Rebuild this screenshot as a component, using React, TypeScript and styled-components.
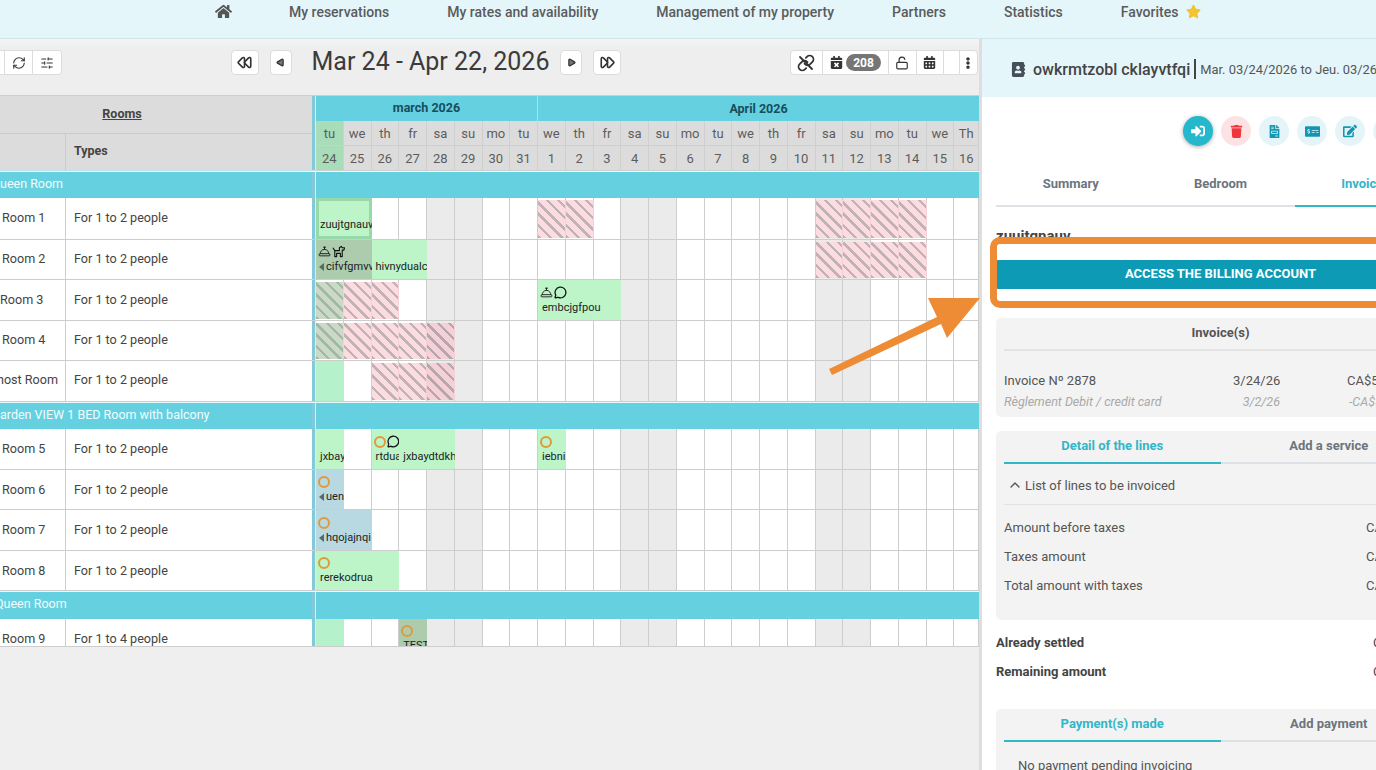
import React from "react";
import styled, { createGlobalStyle, css } from "styled-components";
import { Rewind, FastForward, Play, RefreshCw, SlidersHorizontal, LockOpen, ConciergeBell, MessageCircle, ChevronUp } from "lucide-react";
import { FaHome, FaStar, FaCalendarTimes, FaCalendarAlt, FaEllipsisV, FaAddressBook, FaSignInAlt, FaTrash, FaFileInvoice, FaMoneyCheckAlt, FaEdit } from "react-icons/fa";

const Global = createGlobalStyle`
  html, body { margin: 0; padding: 0; width: 1376px; height: 770px; overflow: hidden; background: #efefef; }
  body { font-family: Roboto, "Liberation Sans", sans-serif; color: #444; }
  * { box-sizing: border-box; }
`;

const Page = styled.div`position: relative; width: 1376px; height: 770px; overflow: hidden;`;
const Nav = styled.nav`
  height: 39px; background: #e4f6fa; border-bottom: 1px solid #cfe6ec;
  display: flex; align-items: flex-start; gap: 58px; padding: 2px 0 0 215px;
`;
const NavItem = styled.a`
  display: flex; align-items: center; gap: 8px; height: 19px;
  font-size: 14px; font-weight: 500; color: #5b5b5b; white-space: nowrap;
`;
const HomeIcon = styled(FaHome)`font-size: 17px; color: #555; margin-right: -1px;`;
const StarIcon = styled(FaStar)`font-size: 15px; color: #f4c430;`;

const Main = styled.div`display: flex; height: 731px;`;
const Left = styled.div`width: 979px; flex: none;`;
const Toolbar = styled.div`
  height: 56px; padding: 11px 1px 0 0; display: flex; justify-content: space-between; align-items: flex-start;
  background: linear-gradient(#f4f4f4, #eeeeee 10px);
`;
const Group = styled.div<{ $open?: boolean }>`
  display: flex; height: 25px; background: #fff; border: 1px solid #dcdcdc; border-radius: 4px; overflow: hidden;
  ${(p) => p.$open && css`border-left: 0; border-radius: 0 4px 4px 0;`}
`;
const GroupCell = styled.div<{ $w: number }>`
  width: ${(p) => p.$w}px; display: flex; align-items: center; justify-content: center; gap: 3px;
  border-right: 1px solid #dcdcdc; color: #333; font-size: 13px;
  &:last-child { border-right: 0; }
`;
const Center = styled.div`display: flex; align-items: flex-start; gap: 11px;`;
const NavBtn = styled.button<{ $w: number }>`
  width: ${(p) => p.$w}px; height: 25px; padding: 0; background: #fff; border: 1px solid #dcdcdc; border-radius: 4px;
  display: flex; align-items: center; justify-content: center; color: #333;
`;
const Title = styled.h1`
  margin: -4px 0 0 9px; font-size: 25px; line-height: 31px; font-weight: 400; color: #3b3b3b; white-space: nowrap;
`;
const Badge = styled.span`
  width: 35px; height: 17px; border-radius: 9px; background: #757575; color: #fff;
  font-size: 12px; font-weight: 700; display: flex; align-items: center; justify-content: center;
`;
const FlipPlay = styled(Play)`transform: rotate(180deg);`;

const Table = styled.div`height: 552px; border-top: 1px solid #cdcdcd; border-bottom: 1px solid #cdcdcd; overflow: hidden; background: #fff;`;
const HeaderRow = styled.div`display: flex; height: 75px; border-bottom: 1px solid #bfe3ea;`;
const HeadLeft = styled.div`width: 312px; flex: none; background: #dcdcdc;`;
const RoomsHead = styled.div`
  height: 38px; border-bottom: 1px solid #cbcbcb; display: flex; align-items: center; justify-content: center;
  padding: 0 68px 2px 0; font-size: 12.5px; font-weight: 700; color: #444; text-decoration: underline;
`;
const TypesHead = styled.div`display: flex; height: 37px;`;
const BlankHead = styled.div`width: 66px; border-right: 1px solid #cbcbcb;`;
const TypeHead = styled.div`padding: 9px 0 0 8px; font-size: 12.5px; font-weight: 700; color: #444;`;
const Divider = styled.div`width: 4px; flex: none; background: #84c9d9; border-right: 1px solid #d8edf2;`;
const HeadRight = styled.div`flex: 1; min-width: 0;`;
const MonthRow = styled.div`display: flex; height: 25px; background: #65d0e0;`;
const Month = styled.div<{ $w: number; $lift: number }>`
  width: ${(p) => p.$w}px; display: flex; align-items: center; justify-content: center; padding-bottom: ${(p) => p.$lift}px;
  font-size: 12.5px; font-weight: 700; color: #174e5c; border-right: 1px solid #a9e2eb;
  &:last-child { border-right: 0; }
`;
const cols = "repeat(23, 27.75px) 25px";
const DayRow = styled.div`display: grid; grid-template-columns: ${cols}; height: 25px;`;
const DayCell = styled.div<{ $today?: boolean }>`
  display: flex; align-items: center; justify-content: center; font-size: 13px; color: #5c5c5c;
  background: ${(p) => (p.$today ? "#a9dcb9" : "#dcdcdc")};
  border-right: 1px solid #cfcfcf; border-bottom: 1px solid #cfcfcf;
`;
const SectionRow = styled.div<{ $h: number }>`display: flex; height: ${(p) => p.$h}px; border-top: 1px solid #e9f8fb;`;
const SectionName = styled.div<{ $shift?: number }>`
  width: 312px; flex: none; background: #65d0e0; color: #f2fdff; font-size: 12.5px; line-height: 23px;
  white-space: nowrap; overflow: hidden; text-indent: ${(p) => p.$shift ?? 0}px;
`;
const SectionFill = styled.div`flex: 1; background: #65d0e0;`;
const Row = styled.div<{ $h: number }>`display: flex; height: ${(p) => p.$h}px; border-bottom: 1px solid #cdcdcd;`;
const RoomName = styled.div<{ $pad: number; $top: number }>`
  width: 66px; flex: none; border-right: 1px solid #cdcdcd; padding-top: ${(p) => p.$top}px; text-indent: ${(p) => p.$pad}px;
  font-size: 12.6px; color: #444; white-space: nowrap; overflow: hidden;
`;
const TypeName = styled.div<{ $top: number }>`width: 246px; flex: none; padding: ${(p) => p.$top}px 0 0 8px; font-size: 12.6px; color: #444;`;
const Timeline = styled.div`flex: 1; display: grid; grid-template-columns: ${cols}; grid-template-rows: minmax(0, 1fr); min-width: 0;`;
const Cell = styled.div<{ $col: number; $weekend: boolean }>`
  grid-row: 1; grid-column: ${(p) => p.$col + 1}; border-right: 1px solid #cdcdcd;
  background: ${(p) => (p.$weekend ? "#ebebeb" : "#fff")};
`;
const tones = {
  pink: ["#fcdbe1", "#c0b3b6"],
  deep: ["#f5d0d8", "#b5a8ac"],
  green: ["#cdd8c8", "#9dbca2"],
};
const Hatch = styled.div<{ $col: number; $tone: keyof typeof tones }>`
  grid-row: 1; grid-column: ${(p) => p.$col + 1}; z-index: 1; margin: 2px 0 1px;
  background: repeating-linear-gradient(45deg, ${(p) => tones[p.$tone][1]} 0 2.4px, ${(p) => tones[p.$tone][0]} 2.4px 8px);
  border-right: 1px solid #f4d0d7;
`;
const kinds = {
  light: "#bdf4c8",
  mint: "#b5f2cb",
  dark: "#adcbad",
  blue: "#b8d8e2",
};
const Booking = styled.div<{ $col: number; $span: number; $kind: keyof typeof kinds; $selected?: boolean }>`
  grid-row: 1; grid-column: ${(p) => p.$col + 1} / span ${(p) => p.$span}; z-index: 2; min-width: 0; overflow: hidden;
  background: ${(p) => kinds[p.$kind]}; display: flex; flex-direction: column; justify-content: flex-end;
  padding: 0 0 6px 4px; font-size: 11px; line-height: 13px; color: #222; white-space: nowrap;
  ${(p) => p.$selected && css`box-shadow: inset 0 0 0 3px #98d9ab; padding-bottom: 8px;`}
`;
const Marks = styled.div`display: flex; align-items: center; gap: 1px; height: 15px; margin: 0 0 1px -2px; color: #111;`;
const Ring = styled.span`width: 12px; height: 12px; border-radius: 50%; border: 2px solid #e09a3a; flex: none;`;
const Label = styled.div<{ $caret?: boolean }>`display: flex; align-items: center; margin-left: ${(p) => (p.$caret ? -1 : 0)}px;`;
const Caret = styled.span`
  width: 0; height: 0; flex: none; margin-right: 2px;
  border-top: 4.5px solid transparent; border-bottom: 4.5px solid transparent; border-right: 5px solid #59696b;
`;

const Panel = styled.aside`
  width: 397px; flex: none; overflow: hidden; background: #fff; border-left: 3px solid #dedede;
`;
const PanelHead = styled.header`
  width: 480px; height: 58px; background: #e4f6fa; display: flex; align-items: center; padding: 2px 0 0 29px; white-space: nowrap;
`;
const Guest = styled.span`font-size: 16px; font-weight: 500; color: #444; margin-left: 7px;`;
const Bar = styled.span`width: 2px; height: 20px; background: #444; margin: 0 4px;`;
const Stay = styled.span`font-size: 12.9px; color: #555;`;
const Content = styled.div`width: 449px; margin-left: 14px;`;
const Actions = styled.div`display: flex; gap: 8px; padding: 19px 0 0 187px; height: 63px;`;
const Action = styled.button<{ $tone: "main" | "red" | "pale" }>`
  width: 30px; height: 30px; flex: none; padding: 0; border: 0; border-radius: 50%; font-size: 14px;
  display: flex; align-items: center; justify-content: center;
  ${(p) => p.$tone === "main" && css`background: #25b7cc; color: #fff; box-shadow: 0 1px 4px rgba(0,0,0,.35);`}
  ${(p) => p.$tone === "red" && css`background: #fde2e4; color: #f0353b;`}
  ${(p) => p.$tone === "pale" && css`background: #e4f4f8; color: #1596b0;`}
`;
const Tabs = styled.div`display: flex;`;
const Tab = styled.div<{ $active?: boolean; $h: number }>`
  flex: 1; height: ${(p) => p.$h}px; display: flex; align-items: center; justify-content: center;
  padding: ${(p) => (p.$h > 40 ? "1px 0 0" : "0 0 2px")};
  font-size: 13px; font-weight: 700; color: ${(p) => (p.$active ? "#32b6c8" : "#6c757d")};
  border-bottom: 2px solid ${(p) => (p.$active ? "#32b6c8" : "#dee2e6")};
`;
const Customer = styled.h2`margin: 21px 0 0; height: 32px; font-size: 15px; line-height: 17px; font-weight: 700; color: #444;`;
const Billing = styled.button`
  display: block; width: 100%; height: 29px; padding: 0 0 2px; border: 0; border-radius: 2px; background: #0c9ab5;
  color: #fff; font: 700 13px Roboto, sans-serif; text-transform: uppercase;
`;
const Card = styled.section<{ $top: number; $h?: number }>`
  margin-top: ${(p) => p.$top}px; ${(p) => p.$h && css`height: ${p.$h}px;`}
  background: #f3f3f3; border-radius: 5px; padding: 0 8px;
`;
const CardTitle = styled.div`
  height: 33px; border-bottom: 2px solid #e4e4e4; text-align: center; line-height: 29px;
  font-size: 13px; font-weight: 700; color: #555;
`;
const InvoiceRow = styled.div<{ $sub?: boolean }>`
  display: grid; grid-template-columns: 229px 47px 1fr; align-items: center; white-space: nowrap;
  ${(p) => p.$sub
    ? css`height: 24px; font-size: 12.5px; font-style: italic; color: #a9a9a9;`
    : css`height: 38px; padding-top: 21px; font-size: 13px; color: #555;`}
`;
const Rt = styled.span`text-align: right;`;
const Sum = styled.span<{ $gap: number }>`padding-left: ${(p) => p.$gap}px;`;
const Toggle = styled.div`
  height: 41px; display: flex; align-items: center; gap: 2px; padding: 2px 0 0 3px;
  border-bottom: 1px solid #e2e2e2; font-size: 13px; color: #555;
`;
const LineRow = styled.div<{ $first?: boolean }>`
  height: 29px; margin-top: ${(p) => (p.$first ? 8 : 0)}px; display: grid; grid-template-columns: 362px 1fr; align-items: center;
  font-size: 13px; color: #555; white-space: nowrap;
`;
const TotalRow = styled.div<{ $top: number }>`
  height: 29px; margin-top: ${(p) => p.$top}px; display: grid; grid-template-columns: 377px 1fr; align-items: center;
  font-size: 13px; font-weight: 700; color: #444; white-space: nowrap;
`;
const TotalValue = styled.span`font-weight: 400;`;
const NoPay = styled.div`padding: 16px 0 0 14px; font-size: 13px; color: #555; white-space: nowrap;`;

const Callout = styled.div`
  position: absolute; left: 990px; top: 237px; width: 460px; height: 71px;
  border: 7px solid #ee8c35; border-radius: 10px; pointer-events: none; z-index: 5;
`;
const Arrow = styled.svg`position: absolute; left: 825px; top: 295px; z-index: 5;`;

const days = ["tu","we","th","fr","sa","su","mo","tu","we","th","fr","sa","su","mo","tu","we","th","fr","sa","su","mo","tu","we","Th"];
const dates = [24,25,26,27,28,29,30,31,1,2,3,4,5,6,7,8,9,10,11,12,13,14,15,16];
const weekend = new Set([4,5,11,12,18,19]);

type B = { col: number; span: number; kind: keyof typeof kinds; text?: string; selected?: boolean; caret?: boolean; marks?: string[] };
type H = [number, keyof typeof tones];
type R = { name: string; pad: number; top: number; type: string; h: number; hatch?: H[]; bookings?: B[] };

const DogMark = () => (
  <svg width="13" height="13" viewBox="0 0 14 14" fill="none" stroke="currentColor" strokeWidth="1.2" strokeLinejoin="round">
    <path d="M1 3 L3 6 H8 V3 L10 1.5 L11 3 H13.5 L12.8 5.5 H11 V12.5 H9 V9 H5 V12.5 H3 V6" />
  </svg>
);

const UnlinkMark = () => (
  <svg width="18" height="18" viewBox="0 0 24 24" fill="none" stroke="currentColor" strokeWidth="2.4" strokeLinecap="round" strokeLinejoin="round">
    <path d="M10 13a5 5 0 0 0 7.54.54l3-3a5 5 0 0 0-7.07-7.07l-1.72 1.71" />
    <path d="M14 11a5 5 0 0 0-7.54-.54l-3 3a5 5 0 0 0 7.07 7.07l1.71-1.71" />
    <line x1="4" y1="4" x2="20" y2="20" />
  </svg>
);

const Mark = ({ m }: { m: string }) => {
  if (m === "ring") return <Ring />;
  if (m === "bell") return <ConciergeBell size={13} strokeWidth={1.6} />;
  if (m === "dog") return <DogMark />;
  return <MessageCircle size={13} strokeWidth={2.4} />;
};

const pinks = (list: number[]): H[] => list.map((c) => [c, "pink"]);
const group1: R[] = [
  { name: "Room 1", pad: 2, top: 12, type: "For 1 to 2 people", h: 42, hatch: pinks([8, 9, 18, 19, 20, 21]),
    bookings: [{ col: 0, span: 2, kind: "light", text: "zuujtgnauv", selected: true }] },
  { name: "Room 2", pad: 2, top: 11, type: "For 1 to 2 people", h: 40, hatch: pinks([18, 19, 20, 21]),
    bookings: [
      { col: 0, span: 2, kind: "dark", text: "cifvfgmvv", caret: true, marks: ["bell", "dog"] },
      { col: 2, span: 2, kind: "light", text: "hivnydualc" },
    ] },
  { name: "Room 3", pad: 0, top: 12, type: "For 1 to 2 people", h: 41, hatch: [[0, "green"], [1, "pink"], [2, "pink"]],
    bookings: [{ col: 8, span: 3, kind: "light", text: "embcjgfpou", marks: ["bell", "chat"] }] },
  { name: "Room 4", pad: 2, top: 11, type: "For 1 to 2 people", h: 40, hatch: [[0, "green"], [1, "pink"], [2, "pink"], [3, "pink"], [4, "deep"]] },
  { name: "host Room", pad: -3, top: 11, type: "For 1 to 2 people", h: 41, hatch: [[2, "pink"], [3, "pink"], [4, "deep"]],
    bookings: [{ col: 0, span: 1, kind: "mint" }] },
];
const group2: R[] = [
  { name: "Room 5", pad: 2, top: 12, type: "For 1 to 2 people", h: 41, bookings: [
    { col: 0, span: 1, kind: "light", text: "jxbaydtdkh" },
    { col: 2, span: 1, kind: "light", text: "rtduaqwp", marks: ["ring", "chat"] },
    { col: 3, span: 2, kind: "light", text: "jxbaydtdkh" },
    { col: 8, span: 1, kind: "light", text: "iebnikqs", marks: ["ring"] },
  ] },
  { name: "Room 6", pad: 2, top: 12, type: "For 1 to 2 people", h: 40, bookings: [{ col: 0, span: 1, kind: "blue", text: "uenmpqz", caret: true, marks: ["ring"] }] },
  { name: "Room 7", pad: 2, top: 12, type: "For 1 to 2 people", h: 41, bookings: [{ col: 0, span: 2, kind: "blue", text: "hqojajnqi", caret: true, marks: ["ring"] }] },
  { name: "Room 8", pad: 2, top: 12, type: "For 1 to 2 people", h: 40, bookings: [{ col: 0, span: 3, kind: "light", text: "rerekodrua", marks: ["ring"] }] },
];
const group3: R[] = [
  { name: "Room 9", pad: 2, top: 12, type: "For 1 to 4 people", h: 40, bookings: [
    { col: 0, span: 1, kind: "mint" },
    { col: 3, span: 1, kind: "dark", text: "TEST", marks: ["ring"] },
  ] },
];

const RoomRow = ({ r }: { r: R }) => (
  <Row $h={r.h}>
    <RoomName $pad={r.pad} $top={r.top}>{r.name}</RoomName>
    <TypeName $top={r.top}>{r.type}</TypeName>
    <Divider />
    <Timeline>
      {days.map((_, i) => <Cell key={i} $col={i} $weekend={weekend.has(i)} />)}
      {(r.hatch ?? []).map(([c, t]) => <Hatch key={c} $col={c} $tone={t} />)}
      {(r.bookings ?? []).map((b) => (
        <Booking key={b.col} $col={b.col} $span={b.span} $kind={b.kind} $selected={b.selected}>
          {b.marks && <Marks>{b.marks.map((m) => <Mark key={m} m={m} />)}</Marks>}
          {b.text && <Label $caret={b.caret}>{b.caret && <Caret />}{b.text}</Label>}
        </Booking>
      ))}
    </Timeline>
  </Row>
);

const Section = ({ name, h, shift }: { name: string; h: number; shift?: number }) => (
  <SectionRow $h={h}>
    <SectionName $shift={shift}>{name}</SectionName>
    <Divider />
    <SectionFill />
  </SectionRow>
);

export default function App() {
  return (
    <Page>
      <Global />
      <Nav>
        <NavItem><HomeIcon /></NavItem>
        <NavItem>My reservations</NavItem>
        <NavItem>My rates and availability</NavItem>
        <NavItem>Management of my property</NavItem>
        <NavItem>Partners</NavItem>
        <NavItem>Statistics</NavItem>
        <NavItem>Favorites <StarIcon /></NavItem>
      </Nav>
      <Main>
        <Left>
          <Toolbar>
            <Group $open>
              <GroupCell $w={5} />
              <GroupCell $w={28}><RefreshCw size={14} strokeWidth={1.8} /></GroupCell>
              <GroupCell $w={28}><SlidersHorizontal size={14} strokeWidth={1.8} /></GroupCell>
            </Group>
            <Center>
              <NavBtn $w={28}><Rewind size={15} strokeWidth={2.6} /></NavBtn>
              <NavBtn $w={22}><FlipPlay size={9} strokeWidth={3.4} fill="#777" /></NavBtn>
              <Title>Mar 24 - Apr 22, 2026</Title>
              <NavBtn $w={22}><Play size={9} strokeWidth={3.4} fill="#777" /></NavBtn>
              <NavBtn $w={28}><FastForward size={15} strokeWidth={2.6} /></NavBtn>
            </Center>
            <Group>
              <GroupCell $w={32}><UnlinkMark /></GroupCell>
              <GroupCell $w={66}><FaCalendarTimes size={13} /><Badge>208</Badge></GroupCell>
              <GroupCell $w={28}><LockOpen size={14} strokeWidth={2} /></GroupCell>
              <GroupCell $w={27}><FaCalendarAlt size={13} /></GroupCell>
              <GroupCell $w={16} />
              <GroupCell $w={17}><FaEllipsisV size={12} /></GroupCell>
            </Group>
          </Toolbar>
          <Table>
            <HeaderRow>
              <HeadLeft>
                <RoomsHead>Rooms</RoomsHead>
                <TypesHead>
                  <BlankHead />
                  <TypeHead>Types</TypeHead>
                </TypesHead>
              </HeadLeft>
              <Divider />
              <HeadRight>
                <MonthRow>
                  <Month $w={222} $lift={2}>march 2026</Month>
                  <Month $w={441} $lift={0}>April 2026</Month>
                </MonthRow>
                <DayRow>{days.map((d, i) => <DayCell key={i} $today={i === 0}>{d}</DayCell>)}</DayRow>
                <DayRow>{dates.map((d, i) => <DayCell key={i} $today={i === 0}>{d}</DayCell>)}</DayRow>
              </HeadRight>
            </HeaderRow>
            <Section name="ueen Room" h={27} />
            {group1.map((r) => <RoomRow key={r.name} r={r} />)}
            <Section name="arden VIEW 1 BED Room with balcony" h={27} />
            {group2.map((r) => <RoomRow key={r.name} r={r} />)}
            <Section name="Queen Room" h={28} shift={-5} />
            {group3.map((r) => <RoomRow key={r.name} r={r} />)}
          </Table>
        </Left>
        <Panel>
          <PanelHead>
            <FaAddressBook size={15} color="#444f5a" />
            <Guest>owkrmtzobl cklayvtfqi</Guest>
            <Bar />
            <Stay>Mar. 03/24/2026 to Jeu. 03/26/2026</Stay>
          </PanelHead>
          <Content>
            <Actions>
              <Action $tone="main"><FaSignInAlt /></Action>
              <Action $tone="red"><FaTrash size={13} /></Action>
              <Action $tone="pale"><FaFileInvoice size={13} /></Action>
              <Action $tone="pale"><FaMoneyCheckAlt size={15} /></Action>
              <Action $tone="pale"><FaEdit /></Action>
              <Action $tone="pale" />
            </Actions>
            <Tabs>
              <Tab $h={47}>Summary</Tab>
              <Tab $h={47}>Bedroom</Tab>
              <Tab $h={47} $active>Invoice(s)</Tab>
            </Tabs>
            <Customer>zuuitgnauv</Customer>
            <Billing>Access the billing account</Billing>
            <Card $top={29} $h={99}>
              <CardTitle>Invoice(s)</CardTitle>
              <InvoiceRow><span>Invoice Nº 2878</span><Rt>3/24/26</Rt><Sum $gap={67}>CA$520.00</Sum></InvoiceRow>
              <InvoiceRow $sub><span>Règlement Debit / credit card</span><Rt>3/2/26</Rt><Sum $gap={69}>-CA$520.00</Sum></InvoiceRow>
            </Card>
            <Card $top={14} $h={189}>
              <Tabs>
                <Tab $h={33} $active>Detail of the lines</Tab>
                <Tab $h={33}>Add a service</Tab>
              </Tabs>
              <Toggle><ChevronUp size={16} />List of lines to be invoiced</Toggle>
              <LineRow $first><span>Amount before taxes</span><span>CA$480.00</span></LineRow>
              <LineRow><span>Taxes amount</span><span>CA$40.00</span></LineRow>
              <LineRow><span>Total amount with taxes</span><span>CA$520.00</span></LineRow>
            </Card>
            <TotalRow $top={8}><span>Already settled</span><TotalValue>CA$520.00</TotalValue></TotalRow>
            <TotalRow $top={0}><span>Remaining amount</span><TotalValue>CA$0.00</TotalValue></TotalRow>
            <Card $top={23} $h={70}>
              <Tabs>
                <Tab $h={33} $active>Payment(s) made</Tab>
                <Tab $h={33}>Add payment</Tab>
              </Tabs>
              <NoPay>No payment pending invoicing</NoPay>
            </Card>
          </Content>
        </Panel>
      </Main>
      <Callout />
      <Arrow width="160" height="85" viewBox="0 0 160 85">
        <polygon fill="#ee8c35" points="4,74 112,22 103,3 155,3 122,43 116,29 7,80" />
      </Arrow>
    </Page>
  );
}
